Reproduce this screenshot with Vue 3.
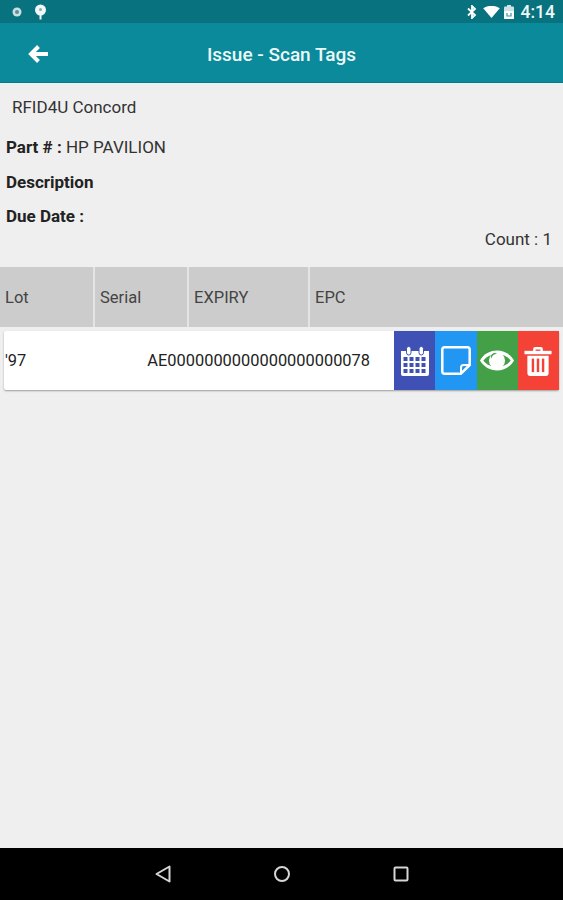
<script setup>
const columns = [
    { name: 'Lot', width: 93 },
    { name: 'Serial', width: 92 },
    { name: 'EXPIRY', width: 119 },
    { name: 'EPC', width: 253 },
]
</script>

<template>
    <div class="screen">
        <!-- Status bar -->
        <div class="status-bar">
            <div class="status-left">
                <svg width="12" height="12" viewBox="0 0 12 12">
                    <circle cx="6" cy="6" r="4.5" fill="#c9dfe3" />
                    <circle cx="6" cy="6" r="2" fill="#5d8f99" />
                </svg>
                <svg width="13" height="16" viewBox="0 0 13 16">
                    <circle cx="6.5" cy="6" r="5.5" fill="#f2f7f8" />
                    <rect x="5.5" y="10" width="2" height="5.5" fill="#f2f7f8" />
                    <circle cx="6.5" cy="5.5" r="1.5" fill="#7fb0b8" />
                </svg>
            </div>
            <div class="status-right">
                <svg width="10" height="14" viewBox="0 0 10 14" fill="none" stroke="#fff" stroke-width="1.8">
                    <path d="M1 3.5 8 10 5 13V1l3 3-7 6.5" />
                </svg>
                <svg width="17" height="12" viewBox="0 0 18 13">
                    <path d="M0 2.5C5-1 13-1 18 2.5L9 13Z" fill="#fff" />
                </svg>
                <svg class="battery" width="10" height="14" viewBox="0 0 10 14">
                    <rect x="3" y="0" width="4" height="2" fill="#cfe3e6" />
                    <rect x="0" y="1.5" width="10" height="12.5" rx="1" fill="#cfe3e6" />
                    <rect x="0" y="6" width="10" height="8" rx="1" fill="#fff" />
                    <path d="M3 8v3h4V8" fill="none" stroke="#3d97a3" stroke-width="1.2" />
                </svg>
                <span class="clock">4:14</span>
            </div>
        </div>

        <!-- App bar -->
        <header class="app-bar">
            <svg class="back" width="20" height="20" viewBox="0 0 20 20" fill="none" stroke="#fff" stroke-width="4">
                <path d="M10.5 2.500 3 10l7.500 7.500M4 10h16" />
            </svg>
            <h1 class="title">Issue - Scan Tags</h1>
        </header>

        <main class="content">
            <div class="site">RFID4U Concord</div>
            <div class="field part"><b>Part # :</b> HP PAVILION</div>
            <div class="field desc"><b>Description</b></div>
            <div class="field due"><b>Due Date :</b></div>
            <div class="count">Count : 1</div>

            <!-- Table head -->
            <div class="table-head">
                <div
                    v-for="col in columns"
                    :key="col.name"
                    class="head-cell"
                    :style="{ width: col.width + 'px' }"
                >
                    {{ col.name }}
                </div>
            </div>

            <!-- Tag row -->
            <div class="tag-card">
                <div class="tag-text">
                    <span>'97</span>
                    <span>AE0000000000000000000078</span>
                </div>
                <div class="action blue-dark">
                    <svg width="28" height="30" viewBox="0 0 28 30" fill="#fff">
                        <path d="M0 5h28v23a2 2 0 0 1-2 2H2a2 2 0 0 1-2-2Z" />
                        <rect x="5.5" y="0.5" width="4.5" height="8.5" rx="2.2" stroke="#3f51b5" stroke-width="1" />
                        <rect x="18" y="0.5" width="4.5" height="8.5" rx="2.2" stroke="#3f51b5" stroke-width="1" />
                        <g fill="#3f51b5">
                            <rect x="2.5" y="11" width="4" height="4" />
                            <rect x="8.5" y="11" width="4" height="4" />
                            <rect x="14.5" y="11" width="4" height="4" />
                            <rect x="20.5" y="11" width="4" height="4" />
                            <rect x="2.5" y="17" width="4" height="4" />
                            <rect x="8.5" y="17" width="4" height="4" />
                            <rect x="14.5" y="17" width="4" height="4" />
                            <rect x="20.5" y="17" width="4" height="4" />
                            <rect x="2.5" y="23" width="4" height="4" />
                            <rect x="8.5" y="23" width="4" height="4" />
                            <rect x="14.5" y="23" width="4" height="4" />
                            <rect x="20.5" y="23" width="4" height="4" />
                        </g>
                    </svg>
                </div>
                <div class="action blue">
                    <svg width="30" height="29" viewBox="0 0 30 29" fill="none" stroke="#fff" stroke-width="2.5">
                        <path d="M20 27.700H3.500A2.300 2.300 0 0 1 1.300 25.500V3.500A2.300 2.300 0 0 1 3.500 1.300h23A2.300 2.300 0 0 1 28.700 3.500V19Z" stroke-linejoin="round" />
                        <path d="M28.700 19h-6.200a2.500 2.500 0 0 0-2.500 2.500V27.700" stroke-width="2" />
                    </svg>
                </div>
                <div class="action green">
                    <svg width="34" height="23" viewBox="0 0 36 24">
                        <path d="M0 12C8 -2 28 -2 36 12C28 26 8 26 0 12Z" fill="#fff" />
                        <path d="M3.500 12C10 3 26 3 32.500 12C26 21 10 21 3.500 12Z" fill="#43a047" />
                        <circle cx="18" cy="12" r="8.500" fill="#fff" />
                        <path d="M12 10a6 6 0 0 1 6-5 4 4 0 0 0-6 5Z" fill="#43a047" />
                    </svg>
                </div>
                <div class="action red">
                    <svg width="28" height="30" viewBox="0 0 28 31" fill="#fff">
                        <path d="M0 5h28v3.500H0Z" />
                        <path d="M9 6V3a2 2 0 0 1 2-2h6a2 2 0 0 1 2 2v3h-2.500V3.500h-5V6Z" />
                        <path d="M3 10h22v18a3 3 0 0 1-3 3H6a3 3 0 0 1-3-3Z" />
                        <g fill="#f44336">
                            <rect x="7.500" y="13" width="2.500" height="14" />
                            <rect x="12.750" y="13" width="2.500" height="14" />
                            <rect x="18" y="13" width="2.500" height="14" />
                        </g>
                    </svg>
                </div>
            </div>
        </main>

        <!-- Nav bar -->
        <footer class="nav-bar">
            <svg width="16" height="18" viewBox="0 0 16 18" fill="none" stroke="#d6d6d6" stroke-width="2" stroke-linejoin="round">
                <path d="M14.500 1.500v15L1.500 9Z" />
            </svg>
            <svg width="18" height="18" viewBox="0 0 18 18" fill="none" stroke="#d6d6d6" stroke-width="2">
                <circle cx="9" cy="9" r="7" />
            </svg>
            <svg width="16" height="16" viewBox="0 0 16 16" fill="none" stroke="#d6d6d6" stroke-width="2" stroke-linejoin="round">
                <rect x="1.500" y="1.500" width="13" height="13" rx="1" />
            </svg>
        </footer>
    </div>
</template>

<style scoped>
    .screen {
        width: 563px;
        height: 900px;
        display: flex;
        flex-direction: column;
        background: #efefef;
        font-family: Roboto, 'Liberation Sans', sans-serif;
        color: #333;
        overflow: hidden;
    }

    .status-bar {
        height: 23px;
        flex-shrink: 0;
        display: flex;
        align-items: center;
        justify-content: space-between;
        padding: 0 8px 0 11px;
        background: #08727f;
    }
    .status-left {
        display: flex;
        align-items: center;
        gap: 11px;
    }
    .status-right {
        display: flex;
        align-items: center;
        gap: 6px;
    }
    .battery {
        margin-left: -2px;
    }
    .clock {
        margin-left: 1px;
        font-size: 17.5px;
        font-weight: 500;
        color: #eef6f7;
    }

    .app-bar {
        height: 60px;
        flex-shrink: 0;
        position: relative;
        display: flex;
        align-items: center;
        justify-content: center;
        box-sizing: border-box;
        background: #0a8a9a;
        border-bottom: 1px solid #08798a;
    }
    .back {
        position: absolute;
        left: 28px;
        top: 21px;
    }
    .title {
        margin: 3px 0 0;
        font-size: 19px;
        font-weight: 500;
        color: #eef7f8;
    }

    .content {
        flex: 1;
        display: flex;
        flex-direction: column;
    }
    .site {
        padding: 15px 0 0 12px;
        font-size: 17px;
        line-height: 19px;
    }
    .field {
        padding-left: 6px;
        font-size: 17px;
        line-height: 19px;
    }
    .field b {
        font-weight: 700;
        color: #222;
    }
    .part {
        margin-top: 21px;
    }
    .desc {
        margin-top: 16px;
    }
    .due {
        margin-top: 15px;
    }
    .count {
        margin-top: 4px;
        padding-right: 11px;
        text-align: right;
        font-size: 17px;
        line-height: 19px;
    }

    .table-head {
        margin-top: 18px;
        height: 60px;
        display: flex;
        gap: 2px;
        background: #e4e4e4;
    }
    .head-cell {
        display: flex;
        align-items: center;
        padding-left: 5px;
        box-sizing: border-box;
        background: #cccccc;
        font-size: 16.5px;
        color: #444;
    }

    .tag-card {
        margin: 4px 4px 0;
        width: 555px;
        height: 59px;
        display: flex;
        background: #fff;
        border-radius: 2px;
        box-shadow: 0 1px 2px rgba(0, 0, 0, 0.35);
    }
    .tag-text {
        width: 390px;
        flex-shrink: 0;
        display: flex;
        align-items: center;
        justify-content: space-between;
        padding: 0 24px 0 1px;
        box-sizing: border-box;
        font-size: 16.4px;
        color: #222;
    }
    .action {
        width: 41.25px;
        flex-shrink: 0;
        display: flex;
        align-items: center;
        justify-content: center;
    }
    .blue-dark {
        background: #3f51b5;
    }
    .blue {
        background: #2196f3;
    }
    .green {
        background: #43a047;
    }
    .red {
        background: #f44336;
    }

    .nav-bar {
        height: 52px;
        flex-shrink: 0;
        display: flex;
        align-items: center;
        justify-content: center;
        gap: 102px;
        background: #000;
    }
</style>

<style>
    html,
    body {
        margin: 0;
        background: #efefef;
    }
</style>
